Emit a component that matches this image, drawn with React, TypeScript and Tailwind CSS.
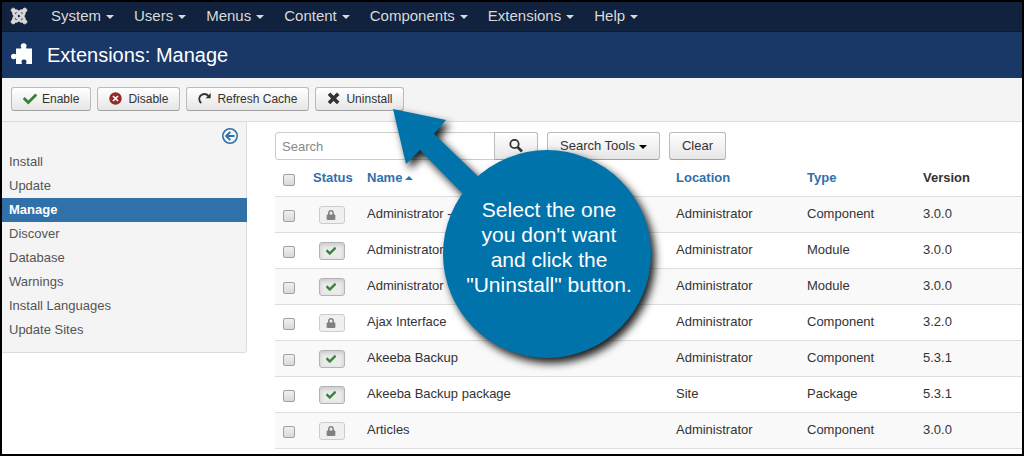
import { FaCheck, FaJoomla, FaLock } from "react-icons/fa"

interface Extension {
  name: string
  location: string
  type: string
  version: string
  locked: boolean
}

const menus = ["System", "Users", "Menus", "Content", "Components", "Extensions", "Help"]

const sidebarItems = [
  "Install",
  "Update",
  "Manage",
  "Discover",
  "Database",
  "Warnings",
  "Install Languages",
  "Update Sites",
]

const extensions: Extension[] = [
  { name: "Administrator -", location: "Administrator", type: "Component", version: "3.0.0", locked: true },
  { name: "Administrator", location: "Administrator", type: "Module", version: "3.0.0", locked: false },
  { name: "Administrator", location: "Administrator", type: "Module", version: "3.0.0", locked: false },
  { name: "Ajax Interface", location: "Administrator", type: "Component", version: "3.2.0", locked: true },
  { name: "Akeeba Backup", location: "Administrator", type: "Component", version: "5.3.1", locked: false },
  { name: "Akeeba Backup package", location: "Site", type: "Package", version: "5.3.1", locked: false },
  { name: "Articles", location: "Administrator", type: "Component", version: "3.0.0", locked: true },
]

const buttonBase =
  "flex items-center border border-[#bbb] border-b-[#a2a2a2] bg-linear-to-b from-white to-[#e6e6e6] text-[#333]"

const toolbarButton = `${buttonBase} h-6 gap-[5px] rounded-[3px] px-[11px]`

const checkboxStyle =
  "mt-1 block size-3 appearance-none rounded-xs border border-[#a0a0a0] bg-linear-to-b from-[#f0f0f0] to-[#d8d8d8]"

function PuzzleIcon() {
  return (
    <svg viewBox="0 0 21 21" className="mb-1 h-[21px] w-[21px]" fill="currentColor" aria-hidden="true">
      <path d="M5 5.500h4.600c1 0 .9-.8.500-1.500C9.200 2.600 10.300.3 12.700.3s3.500 2.300 2.600 3.700c-.4.700-.5 1.500.5 1.500H21V21h-5.200c-1 0-.9-.8-.5-1.500.8-1.300-.2-3-2.300-3s-3.100 1.700-2.300 3c.4.700.5 1.500-.5 1.500H5v-4.600c0-1-.8-.9-1.500-.500C2.100 16.800 0 15.700 0 13.400s2.100-3.300 3.500-2.500c.7.400 1.500.5 1.500-.5z" />
    </svg>
  )
}

function DisableIcon() {
  return (
    <svg viewBox="0 0 14 14" className="size-3.5" aria-hidden="true">
      <circle cx="6.500" cy="6.500" r="6.200" fill="#942a25" />
      <path d="M4 4l5 5M9 4L4 9" stroke="#fff" strokeWidth="1.700" />
    </svg>
  )
}

function RefreshIcon() {
  return (
    <svg viewBox="0 0 14 14" className="size-3.5" aria-hidden="true">
      <path d="M3.200 11C.3 8.300.7 4.200 4 2.600c2.400-1.100 4.900-.4 6.500 1.300" fill="none" stroke="#333" strokeWidth="1.800" />
      <path d="M12.700 1v5.200H7.600z" fill="#333" />
    </svg>
  )
}

function CrossIcon() {
  return (
    <svg viewBox="0 0 14 14" className="size-3.5" aria-hidden="true">
      <path d="M2 1.800l9.200 9.200M11.200 1.800L2 11" stroke="#333" strokeWidth="3.600" />
    </svg>
  )
}

function SearchIcon() {
  return (
    <svg viewBox="0 0 14 14" className="size-3.5" fill="none" stroke="#333" aria-hidden="true">
      <circle cx="5.500" cy="5" r="4.200" strokeWidth="1.800" />
      <path d="M8.500 8l4.500 4.500" strokeWidth="2.600" />
    </svg>
  )
}

function BackIcon() {
  return (
    <svg viewBox="0 0 16 16" className="size-4" fill="none" stroke="#2f71ab" aria-hidden="true">
      <circle cx="8" cy="8" r="7.200" strokeWidth="1.600" />
      <path d="M12.500 8H5M8.300 3.900L4.200 8l4.100 4.100" strokeWidth="2" />
    </svg>
  )
}

function Callout() {
  return (
    <div className="pointer-events-none absolute top-[107px] left-[391px] h-[252px] w-[262px]">
      <svg
        viewBox="0 0 262 252"
        className="h-full w-full overflow-visible drop-shadow-[4px_5px_4px_rgba(0,0,0,0.9)]"
        fill="#0173ab"
        aria-hidden="true"
      >
        <path d="M0 0L53 11L41 25L92 74L77 92L27 41L13 55Z" />
        <circle cx="154" cy="145" r="104" />
      </svg>
      <p className="absolute top-[88px] left-[52px] w-[208px] text-center text-[21px] leading-[25px] text-white">
        Select the one
        <br />
        you don't want
        <br />
        and click the
        <br />
        "Uninstall" button.
      </p>
    </div>
  )
}

export default function App() {
  return (
    <div className="relative overflow-hidden border-2 border-black bg-white font-['Liberation_Sans',Arial,sans-serif] text-[13px] leading-[18px] text-[#333]">
      <nav className="flex h-[30px] items-center border-b border-[#0c192e] bg-[#10223e] pb-0.5 pl-2 text-[15px] text-[#d9d9d9]">
        <a href="#" aria-label="Home" className="mr-[23px]">
          <FaJoomla className="size-[18px] stroke-current stroke-[24]" />
        </a>
        <ul className="flex gap-5">
          {menus.map((menu) => (
            <li key={menu}>
              <a href="#" className="flex items-center gap-[5px]">
                {menu}
                <span className="mt-0.5 border-x-4 border-t-4 border-x-transparent" />
              </a>
            </li>
          ))}
        </ul>
      </nav>

      <header className="flex h-[46px] items-center gap-[15px] bg-[#1a3867] pl-[9px] text-white">
        <PuzzleIcon />
        <h1 className="text-xl">Extensions: Manage</h1>
      </header>

      <div className="flex gap-1.5 border-b border-[#dcdcdc] bg-[#f4f4f4] px-[9px] pt-[9px] pb-[10px] text-xs">
        <button className={toolbarButton}>
          <FaCheck className="size-3.5 text-[#378137]" />
          Enable
        </button>
        <button className={toolbarButton}>
          <DisableIcon />
          Disable
        </button>
        <button className={toolbarButton}>
          <RefreshIcon />
          Refresh Cache
        </button>
        <button className={toolbarButton}>
          <CrossIcon />
          Uninstall
        </button>
      </div>

      <div className="flex items-start">
        <aside className="w-[245px] shrink-0 rounded-br-[3px] border-r border-b border-[#dcdcdc] bg-[#f4f4f4] pb-2.5">
          <div className="flex justify-end px-2 pt-1.5 pb-1.5">
            <button aria-label="Hide sidebar">
              <BackIcon />
            </button>
          </div>
          <ul>
            {sidebarItems.map((item) => (
              <li key={item}>
                <a
                  href="#"
                  className={
                    item === "Manage"
                      ? "-mr-px block bg-[#3071a9] px-[7px] leading-6 font-bold text-white"
                      : "block px-[7px] leading-6 text-[#555]"
                  }
                >
                  {item}
                </a>
              </li>
            ))}
          </ul>
        </aside>

        <main className="min-w-0 flex-1 pt-2.5 pb-[5px] pl-7">
          <form className="flex items-center gap-[9px]">
            <div className="flex">
              <input
                type="text"
                aria-label="Search"
                placeholder="Search"
                className="h-7 w-[220px] rounded-l-[3px] border border-[#ccc] px-1.5 placeholder:text-[#888]"
              />
              <button type="button" aria-label="Search" className={`${buttonBase} -ml-px h-7 w-11 justify-center rounded-r-[3px]`}>
                <SearchIcon />
              </button>
            </div>
            <button type="button" className={`${buttonBase} h-7 gap-1 rounded-[3px] px-3`}>
              Search Tools
              <span className="mt-0.5 border-x-4 border-t-4 border-x-transparent border-t-black" />
            </button>
            <button type="button" className={`${buttonBase} h-7 rounded-[3px] px-3`}>
              Clear
            </button>
          </form>

          <table className="w-full table-fixed border-collapse text-left">
            <thead>
              <tr className="h-9 text-[#3071a9]">
                <th className="w-7 pl-2">
                  <input type="checkbox" aria-label="Check all" className={checkboxStyle} />
                </th>
                <th className="w-16 pl-2.5">
                  <a href="#">Status</a>
                </th>
                <th>
                  <a href="#" className="flex items-center gap-[3px]">
                    Name
                    <span className="border-x-4 border-b-4 border-x-transparent" />
                  </a>
                </th>
                <th className="w-[131px]">
                  <a href="#">Location</a>
                </th>
                <th className="w-[116px]">
                  <a href="#">Type</a>
                </th>
                <th className="w-[99px] text-[#333]">Version</th>
              </tr>
            </thead>
            <tbody>
              {extensions.map((extension, index) => (
                <tr key={index} className="h-9 border-t border-[#ddd] odd:bg-[#f9f9f9] last:border-b">
                  <td className="pl-2">
                    <input type="checkbox" aria-label={`Select ${extension.name}`} className={checkboxStyle} />
                  </td>
                  <td className="pt-0.5 pl-4">
                    <button
                      aria-label={extension.locked ? "Protected" : "Enabled"}
                      className={
                        extension.locked
                          ? "flex h-[18px] w-[26px] items-center justify-center rounded-[3px] border border-[#ccc] bg-[#f0f0f0] pr-0.5 text-[#808080]"
                          : "flex h-[18px] w-[26px] items-center justify-center rounded-[3px] border border-[#b3b3b3] bg-[#ebebeb] pr-0.5 text-[#378137] shadow-[inset_0_2px_4px_rgba(0,0,0,0.15)]"
                      }
                    >
                      {extension.locked ? (
                        <FaLock className="size-2.5" />
                      ) : (
                        <FaCheck className="size-2.5 stroke-current stroke-[30]" />
                      )}
                    </button>
                  </td>
                  <td>{extension.name}</td>
                  <td>{extension.location}</td>
                  <td>{extension.type}</td>
                  <td>{extension.version}</td>
                </tr>
              ))}
            </tbody>
          </table>
        </main>
      </div>

      <Callout />
    </div>
  )
}
